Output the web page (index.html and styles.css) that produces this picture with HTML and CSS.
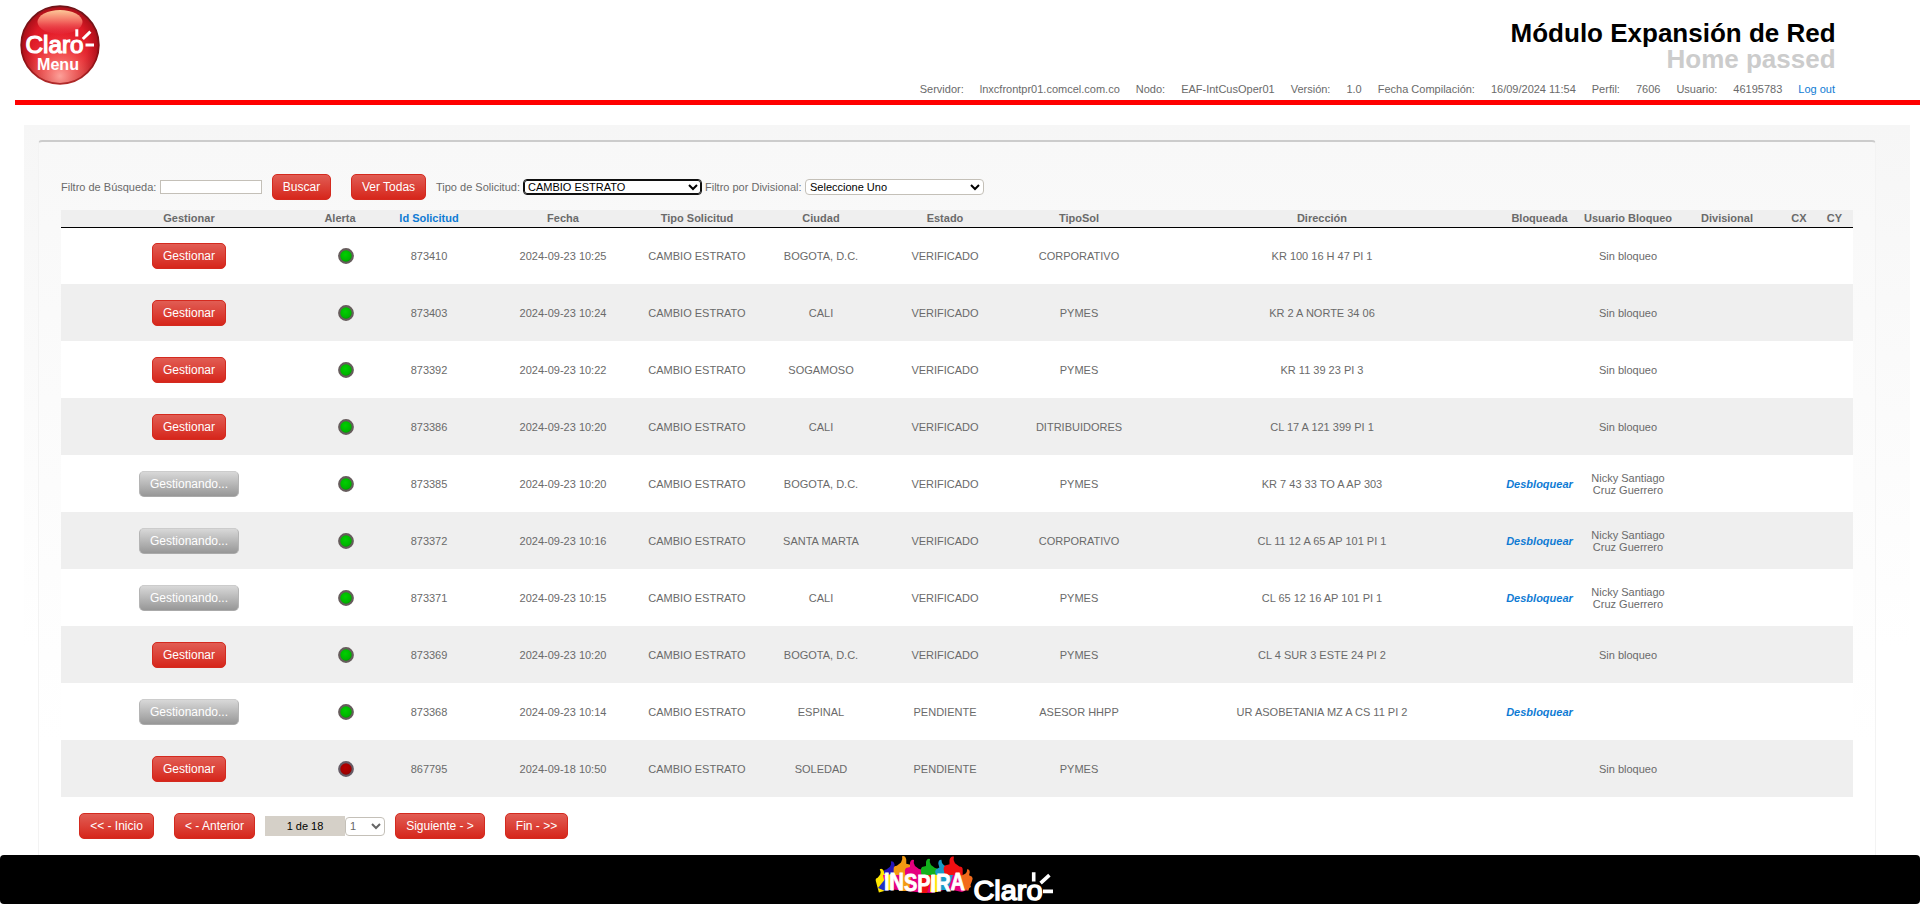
FILE: index.html
```html
<!DOCTYPE html>
<html lang="es">
<head>
<meta charset="utf-8">
<title>Módulo Expansión de Red</title>
<link rel="stylesheet" href="styles.css">
</head>
<body>
<svg class="defs" width="0" height="0" aria-hidden="true">
  <defs>
    <radialGradient id="ball" cx="50%" cy="50%" r="50%">
      <stop offset="0" stop-color="#ea2430"/><stop offset=".7" stop-color="#de1a26"/><stop offset="1" stop-color="#a80f18"/>
    </radialGradient>
    <radialGradient id="glow" cx="50%" cy="90%" r="60%">
      <stop offset="0" stop-color="#ffa8a0" stop-opacity=".95"/><stop offset=".5" stop-color="#f96a64" stop-opacity=".6"/><stop offset="1" stop-color="#ea2430" stop-opacity="0"/>
    </radialGradient>
    <linearGradient id="shine" x1="0" y1="0" x2="0" y2="1">
      <stop offset="0" stop-color="#fdc898"/><stop offset=".5" stop-color="#f2665e"/><stop offset="1" stop-color="#e62c40" stop-opacity=".3"/>
    </linearGradient>
    <linearGradient id="rim" x1="0" y1="0" x2="0" y2="1">
      <stop offset="0" stop-color="#6e1418"/><stop offset=".7" stop-color="#8e1015"/><stop offset="1" stop-color="#b02a2a"/>
    </linearGradient>
    <radialGradient id="green" cx="45%" cy="40%" r="60%">
      <stop offset="0" stop-color="#00d000"/><stop offset=".7" stop-color="#00b400"/><stop offset="1" stop-color="#008a00"/>
    </radialGradient>
    <radialGradient id="red" cx="45%" cy="40%" r="60%">
      <stop offset="0" stop-color="#b80000"/><stop offset=".7" stop-color="#a00000"/><stop offset="1" stop-color="#780000"/>
    </radialGradient>
    <symbol id="dot-green" viewBox="0 0 16 16"><circle cx="8" cy="8" r="6.8" fill="url(#green)" stroke="#665c5c" stroke-width="2.2"/></symbol>
    <symbol id="dot-red" viewBox="0 0 16 16"><circle cx="8" cy="8" r="6.8" fill="url(#red)" stroke="#665c66" stroke-width="2.2"/></symbol>
  </defs>
</svg>

<header class="header">
  <svg class="logo" viewBox="0 0 80 80" width="80" height="80">
    <circle cx="40" cy="40" r="38.8" fill="url(#ball)"/>
    <circle cx="40" cy="40" r="38.8" fill="url(#glow)" stroke="url(#rim)" stroke-width="1.8"/>
    <ellipse cx="40" cy="17" rx="22.5" ry="12" fill="url(#shine)"/>
    <text class="logo-claro" x="5.5" y="47.8" textLength="58" lengthAdjust="spacingAndGlyphs">Claro</text>
    <g stroke="#fff" stroke-width="3"><path d="M56.8 24.3v7.2M62.8 34l7.6-7.4M65.5 40h8.5"/></g>
    <text class="logo-menu" x="17" y="64.7" textLength="42" lengthAdjust="spacingAndGlyphs">Menu</text>
  </svg>
  <div class="heading">
    <h1 class="title">Módulo Expansión de Red</h1>
    <h2 class="subtitle">Home passed</h2>
    <div class="info">
      <span>Servidor:</span><span>lnxcfrontpr01.comcel.com.co</span><span>Nodo:</span><span>EAF-IntCusOper01</span><span>Versión:</span><span>1.0</span><span>Fecha Compilación:</span><span>16/09/2024 11:54</span><span>Perfil:</span><span>7606</span><span>Usuario:</span><span>46195783</span><a class="logout">Log out</a>
    </div>
  </div>
</header>

<main class="content">
  <section class="panel">
    <form class="filters">
      <label class="lbl-search">Filtro de Búsqueda:</label>
      <input class="search" type="text">
      <button class="btn btn-search" type="button">Buscar</button>
      <button class="btn btn-all" type="button">Ver Todas</button>
      <label class="lbl-type">Tipo de Solicitud:</label>
      <select class="select focused"><option>CAMBIO ESTRATO</option></select>
      <label class="lbl-div">Filtro por Divisional:</label>
      <select class="select"><option>Seleccione Uno</option></select>
    </form>

    <table class="grid">
      <colgroup><col class="c1"><col class="c2"><col class="c3"><col class="c4"><col class="c5"><col class="c6"><col class="c7"><col class="c8"><col class="c9"><col class="c10"><col class="c11"><col class="c12"><col class="c13"><col class="c14"></colgroup>
      <thead><tr><th>Gestionar</th><th>Alerta</th><th class="sorted">Id Solicitud</th><th>Fecha</th><th>Tipo Solicitud</th><th>Ciudad</th><th>Estado</th><th>TipoSol</th><th>Dirección</th><th class="lock">Bloqueada</th><th>Usuario Bloqueo</th><th>Divisional</th><th>CX</th><th>CY</th></tr></thead>
      <tbody>
        <tr><td><button class="btn">Gestionar</button></td><td><svg class="dot"><use href="#dot-green"/></svg></td><td>873410</td><td>2024-09-23 10:25</td><td>CAMBIO ESTRATO</td><td>BOGOTA, D.C.</td><td>VERIFICADO</td><td>CORPORATIVO</td><td>KR 100 16 H 47 PI 1</td><td></td><td>Sin bloqueo</td><td></td><td></td><td></td></tr>
        <tr><td><button class="btn">Gestionar</button></td><td><svg class="dot"><use href="#dot-green"/></svg></td><td>873403</td><td>2024-09-23 10:24</td><td>CAMBIO ESTRATO</td><td>CALI</td><td>VERIFICADO</td><td>PYMES</td><td>KR 2 A NORTE 34 06</td><td></td><td>Sin bloqueo</td><td></td><td></td><td></td></tr>
        <tr><td><button class="btn">Gestionar</button></td><td><svg class="dot"><use href="#dot-green"/></svg></td><td>873392</td><td>2024-09-23 10:22</td><td>CAMBIO ESTRATO</td><td>SOGAMOSO</td><td>VERIFICADO</td><td>PYMES</td><td>KR 11 39 23 PI 3</td><td></td><td>Sin bloqueo</td><td></td><td></td><td></td></tr>
        <tr><td><button class="btn">Gestionar</button></td><td><svg class="dot"><use href="#dot-green"/></svg></td><td>873386</td><td>2024-09-23 10:20</td><td>CAMBIO ESTRATO</td><td>CALI</td><td>VERIFICADO</td><td>DITRIBUIDORES</td><td>CL 17 A 121 399 PI 1</td><td></td><td>Sin bloqueo</td><td></td><td></td><td></td></tr>
        <tr><td><button class="btn busy">Gestionando...</button></td><td><svg class="dot"><use href="#dot-green"/></svg></td><td>873385</td><td>2024-09-23 10:20</td><td>CAMBIO ESTRATO</td><td>BOGOTA, D.C.</td><td>VERIFICADO</td><td>PYMES</td><td>KR 7 43 33 TO A AP 303</td><td class="lock"><a class="unlock">Desbloquear</a></td><td>Nicky Santiago Cruz Guerrero</td><td></td><td></td><td></td></tr>
        <tr><td><button class="btn busy">Gestionando...</button></td><td><svg class="dot"><use href="#dot-green"/></svg></td><td>873372</td><td>2024-09-23 10:16</td><td>CAMBIO ESTRATO</td><td>SANTA MARTA</td><td>VERIFICADO</td><td>CORPORATIVO</td><td>CL 11 12 A 65 AP 101 PI 1</td><td class="lock"><a class="unlock">Desbloquear</a></td><td>Nicky Santiago Cruz Guerrero</td><td></td><td></td><td></td></tr>
        <tr><td><button class="btn busy">Gestionando...</button></td><td><svg class="dot"><use href="#dot-green"/></svg></td><td>873371</td><td>2024-09-23 10:15</td><td>CAMBIO ESTRATO</td><td>CALI</td><td>VERIFICADO</td><td>PYMES</td><td>CL 65 12 16 AP 101 PI 1</td><td class="lock"><a class="unlock">Desbloquear</a></td><td>Nicky Santiago Cruz Guerrero</td><td></td><td></td><td></td></tr>
        <tr><td><button class="btn">Gestionar</button></td><td><svg class="dot"><use href="#dot-green"/></svg></td><td>873369</td><td>2024-09-23 10:20</td><td>CAMBIO ESTRATO</td><td>BOGOTA, D.C.</td><td>VERIFICADO</td><td>PYMES</td><td>CL 4 SUR 3 ESTE 24 PI 2</td><td></td><td>Sin bloqueo</td><td></td><td></td><td></td></tr>
        <tr><td><button class="btn busy">Gestionando...</button></td><td><svg class="dot"><use href="#dot-green"/></svg></td><td>873368</td><td>2024-09-23 10:14</td><td>CAMBIO ESTRATO</td><td>ESPINAL</td><td>PENDIENTE</td><td>ASESOR HHPP</td><td>UR ASOBETANIA MZ A CS 11 PI 2</td><td class="lock"><a class="unlock">Desbloquear</a></td><td></td><td></td><td></td><td></td></tr>
        <tr><td><button class="btn">Gestionar</button></td><td><svg class="dot"><use href="#dot-red"/></svg></td><td>867795</td><td>2024-09-18 10:50</td><td>CAMBIO ESTRATO</td><td>SOLEDAD</td><td>PENDIENTE</td><td>PYMES</td><td></td><td></td><td>Sin bloqueo</td><td></td><td></td><td></td></tr>
      </tbody>
    </table>

    <nav class="pager">
      <button class="btn btn-first">&lt;&lt; - Inicio</button>
      <button class="btn btn-prev">&lt; - Anterior</button>
      <span class="page-label">1 de 18</span>
      <select class="select page-select"><option>1</option></select>
      <button class="btn btn-next">Siguiente - &gt;</button>
      <button class="btn btn-last">Fin - &gt;&gt;</button>
    </nav>
  </section>
</main>

<footer class="footer">
  <svg class="brands" viewBox="0 0 180 49" width="180" height="49">
    <!-- thumbs-up hands behind the wordmark -->
    <defs><path id="hand" d="M-7 12L-7-2Q-7-5-4-5L0-8Q2-11 1-14Q4-15 5-11L5-7L9-6Q11-4 10-1L8 12Z"/></defs>
    <use href="#hand" fill="#2416b8" transform="translate(15 19) scale(.9)"/>
    <use href="#hand" fill="#ffe600" transform="translate(7 26) rotate(-15) scale(.85)"/>
    <use href="#hand" fill="#f39a12" transform="translate(26 16) scale(1.05)"/>
    <use href="#hand" fill="#e6007e" transform="translate(40 19) scale(-1 1)"/>
    <use href="#hand" fill="#12b01c" transform="translate(56 18) scale(-1 1)"/>
    <use href="#hand" fill="#8cd820" transform="translate(65 20) scale(.6)"/>
    <use href="#hand" fill="#1a9bc8" transform="translate(71 18) scale(-1 1) rotate(15)"/>
    <use href="#hand" fill="#f00f12" transform="translate(80 17) scale(-1.1 1.1)"/>
    <use href="#hand" fill="#f26a1b" transform="translate(89 25) scale(.8) rotate(12)"/>
    <path d="M8 20h76l8 15-5 2-14-3-17 4-15-1-18-2-12-1z" fill="#e6007e"/>
    <path d="M3 33l8-10 7 12-8 1z" fill="#2030c0"/><path d="M10 21l6-2 2 16h-5z" fill="#ffe600"/><path d="M24 20h12l-2 16H24z" fill="#f39a12"/><path d="M47 20h10l-5 18h-8z" fill="#f00f12"/><path d="M56 20h9l-2 17H55z" fill="#ffe600"/><path d="M66 20h12l-5 15h-8z" fill="#1a9bc8"/><path d="M84 24l4 12 8-4-4-10z" fill="#f26a1b"/>
    <text class="inspira" x="9" y="35.3" dy="0 0 1 .8 -.2 -.8 -.8" textLength="81" lengthAdjust="spacingAndGlyphs">INSPIRA</text>
    <text class="claro" x="98.5" y="45.4" textLength="69" lengthAdjust="spacingAndGlyphs">Claro</text>
    <g stroke="#fff" stroke-width="3.6"><path d="M158.7 17.3v9.2M165.6 28.2l8.8-8M168 36.4h10"/></g>
  </svg>
</footer>
</body>
</html>
```
FILE: styles.css
```css
* { box-sizing: border-box; }
body { margin: 0; background: #fff; color: #6a6a6a; font: 11px "Liberation Sans", Arial, sans-serif; }
.defs { position: absolute; }
a { color: #0f7bd4; }

.header { margin-left: 15px; height: 105px; border-bottom: 5px solid #f00; padding: 5px 85px 0 5px; display: flex; justify-content: space-between; }
.logo-claro { font: 23.5px "Liberation Sans", Arial, sans-serif; fill: #fff; stroke: #fff; stroke-width: 1.2; }
.logo-menu { font: bold 16px "Liberation Sans", Arial, sans-serif; fill: #fff; }
.heading { text-align: right; padding-top: 15px; }
.title, .subtitle { margin: 0 -.6px 0 0; font-size: 26px; line-height: 26px; font-weight: bold; }
.title { color: #000; }
.subtitle { color: #ccc; }
.info { display: flex; justify-content: flex-end; gap: 16px; margin-top: 11px; line-height: 13px; }

.content { margin: 20px 10px 0 24px; height: 730px; padding: 15px 34px 0 14px; background: linear-gradient(#f6f6f6, #fff 520px); }
.panel { height: 715px; padding: 32px 22px 0 22px; border-top: 2px solid #ccc; border-left: 1px solid #f3f3f3; border-right: 1px solid #f3f3f3; border-radius: 4px 4px 0 0; background: linear-gradient(#f8f8f8, #fff 600px); }

.filters { display: flex; align-items: center; height: 26px; margin-bottom: 10px; white-space: nowrap; }
.lbl-search { width: 99px; }
.search { width: 102px; height: 14px; padding: 0; border: 1px solid #c4c0b8; background: #fff; margin-right: 10px; }
.btn { height: 26px; padding: 0 9.5px; border: 1px solid #d42a1f; border-radius: 5px; background: linear-gradient(#e15d54, #d6261b); color: #fff; font: 12px "Liberation Sans", Arial, sans-serif; white-space: nowrap; }
.busy { border-color: #ccc #b4b4b4 #aaa; background: linear-gradient(#d8d8d8, #979797); }
.btn-search { width: 59px; margin-right: 20px; }
.btn-all { width: 75px; margin-right: 10px; }
.lbl-type { width: 87px; }
.lbl-div { width: 100px; }
.select { width: 179px; height: 16px; padding: 0; border: 1px solid #c4c0b8; border-radius: 4px; background-color: #fff; color: #000; font: 11px "Liberation Sans", Arial, sans-serif; }
.focused { border-color: #101010; outline: 1px solid #101010; outline-offset: -2px; margin-right: 3px; }

.grid { width: 1792px; table-layout: fixed; border-collapse: collapse; text-align: center; }
.grid th { height: 17px; padding: 0; background: #efefef; border-bottom: 1px solid #000; line-height: 12px; white-space: nowrap; }
.grid .sorted { color: #0f7bd4; }
.grid td { height: 57px; padding: 0; vertical-align: middle; line-height: 12px; }
.grid .lock { padding-right: 2px; }
.grid tbody tr { background: #fff; }
.grid tbody tr:nth-child(even) { background: #efefef; }
.dot { display: block; width: 16px; height: 16px; margin-left: 21px; }
.unlock { font-weight: bold; font-style: italic; }
.c1 { width: 256px; }
.c2 { width: 46px; }
.c3 { width: 132px; }
.c4 { width: 136px; }
.c5 { width: 132px; }
.c6 { width: 116px; }
.c7 { width: 132px; }
.c8 { width: 136px; }
.c9 { width: 350px; }
.c10 { width: 87px; }
.c11 { width: 88px; }
.c12 { width: 110px; }
.c13 { width: 34px; }
.c14 { width: 37px; }

.pager { display: flex; align-items: center; height: 26px; margin: 16px 0 0 18px; }
.btn-first { width: 75px; margin-right: 20px; }
.btn-prev { width: 81px; margin-right: 10px; }
.page-label { width: 80px; height: 20px; line-height: 20px; text-align: center; color: #000; background: #d5d0c8; }
.page-select { width: 40px; height: 19px; color: #666; margin-right: 10px; }
.btn-next { width: 90px; margin-right: 20px; }
.btn-last { width: 63px; }

.footer { height: 49px; border-radius: 4px; background: #000; padding-left: 875px; }
.brands { display: block; overflow: visible; }
.claro { font: 27px "Liberation Sans", Arial, sans-serif; fill: #fff; stroke: #fff; stroke-width: 1.5; }
.inspira { font: bold 24px "Liberation Sans", Arial, sans-serif; fill: #fff; stroke: #fff; stroke-width: .8; }
```
